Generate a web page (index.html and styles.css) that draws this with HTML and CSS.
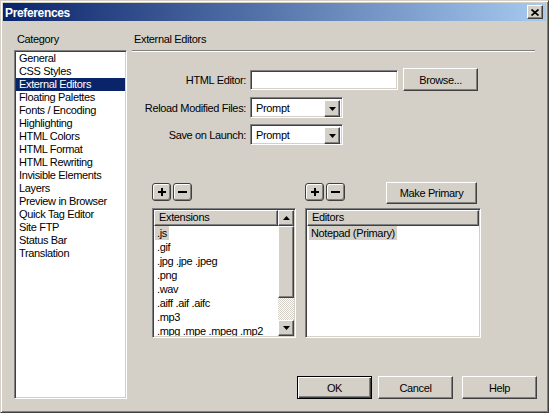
FILE: index.html
```html
<!DOCTYPE html>
<html>
<head>
<meta charset="utf-8">
<title>Preferences</title>
<link rel="stylesheet" href="styles.css">
</head>
<body>
<div class="window">
  <div class="titlebar">
    <span class="title">Preferences</span>
    <span class="close btn"><svg width="8" height="7" viewBox="0 0 8 7"><path d="M0.5 0.5 L7.5 6.5 M7.5 0.5 L0.5 6.5" stroke="#000" stroke-width="1.7" fill="none"/></svg></span>
  </div>
  <div class="body">
    <div class="leftcol">
      <div class="label cat-label">Category</div>
      <div class="listbox sunken">
        <div class="item">General</div>
        <div class="item">CSS Styles</div>
        <div class="item sel">External Editors</div>
        <div class="item">Floating Palettes</div>
        <div class="item">Fonts / Encoding</div>
        <div class="item">Highlighting</div>
        <div class="item">HTML Colors</div>
        <div class="item">HTML Format</div>
        <div class="item">HTML Rewriting</div>
        <div class="item">Invisible Elements</div>
        <div class="item">Layers</div>
        <div class="item">Preview in Browser</div>
        <div class="item">Quick Tag Editor</div>
        <div class="item">Site FTP</div>
        <div class="item">Status Bar</div>
        <div class="item">Translation</div>
      </div>
    </div>
    <div class="rightcol">
      <div class="label section">External Editors</div>
      <div class="sep"></div>
      <div class="form">
        <div class="row r1">
          <span class="flabel">HTML Editor:</span>
          <span class="edit sunken"></span>
          <span class="btn browse">Browse...</span>
        </div>
        <div class="row">
          <span class="flabel">Reload Modified Files:</span>
          <span class="combo sunken"><span class="val">Prompt</span><span class="dd btn"><svg width="7" height="4" viewBox="0 0 7 4"><polygon points="0,0 7,0 3.5,4" fill="#000"/></svg></span></span>
        </div>
        <div class="row">
          <span class="flabel">Save on Launch:</span>
          <span class="combo sunken"><span class="val">Prompt</span><span class="dd btn"><svg width="7" height="4" viewBox="0 0 7 4"><polygon points="0,0 7,0 3.5,4" fill="#000"/></svg></span></span>
        </div>
      </div>
      <div class="lower">
        <div class="group g-ext">
          <div class="tools">
            <span class="pm"><svg width="8" height="8" viewBox="0 0 8 8"><rect x="0" y="3" width="8" height="2" fill="#000"/><rect x="3" y="0" width="2" height="8" fill="#000"/></svg></span>
            <span class="pm"><svg width="9" height="2" viewBox="0 0 9 2"><rect x="0" y="0" width="9" height="2" fill="#000"/></svg></span>
          </div>
          <div class="list sunken ext">
            <div class="lcontent">
              <div class="lhead">Extensions</div>
              <div class="litem"><span class="hl">.js</span></div>
              <div class="litem"><span>.gif</span></div>
              <div class="litem"><span>.jpg .jpe .jpeg</span></div>
              <div class="litem"><span>.png</span></div>
              <div class="litem"><span>.wav</span></div>
              <div class="litem"><span>.aiff .aif .aifc</span></div>
              <div class="litem"><span>.mp3</span></div>
              <div class="litem"><span>.mpg .mpe .mpeg .mp2</span></div>
            </div>
            <div class="vscroll">
              <span class="sbb btn"><svg width="7" height="4" viewBox="0 0 7 4"><polygon points="0,4 7,4 3.5,0" fill="#000"/></svg></span>
              <span class="thumb btn"></span>
              <span class="track"></span>
              <span class="sbb btn"><svg width="7" height="4" viewBox="0 0 7 4"><polygon points="0,0 7,0 3.5,4" fill="#000"/></svg></span>
            </div>
          </div>
        </div>
        <div class="group g-ed">
          <div class="tools">
            <span class="pm"><svg width="8" height="8" viewBox="0 0 8 8"><rect x="0" y="3" width="8" height="2" fill="#000"/><rect x="3" y="0" width="2" height="8" fill="#000"/></svg></span>
            <span class="pm"><svg width="9" height="2" viewBox="0 0 9 2"><rect x="0" y="0" width="9" height="2" fill="#000"/></svg></span>
            <span class="btn primary">Make Primary</span>
          </div>
          <div class="list sunken ed">
            <div class="lcontent">
              <div class="lhead">Editors</div>
              <div class="litem"><span class="hl">Notepad (Primary)</span></div>
            </div>
          </div>
        </div>
      </div>
      <div class="buttons">
        <span class="btn dlg ok">OK</span>
        <span class="btn dlg cancel">Cancel</span>
        <span class="btn dlg help">Help</span>
      </div>
    </div>
  </div>
</div>
</body>
</html>
```
FILE: styles.css
```css
* { box-sizing: border-box; }
html, body { margin: 0; padding: 0; }
body {
  width: 549px;
  height: 413px;
  overflow: hidden;
  background: #d4d0c8;
  font-family: "Liberation Sans", Arial, sans-serif;
  font-size: 11px;
  letter-spacing: -0.35px;
  color: #000;
}
.window {
  width: 549px;
  height: 413px;
  background: #d4d0c8;
  border: 1px solid;
  border-color: #d4d0c8 #404040 #404040 #d4d0c8;
  box-shadow: inset 1px 1px #fff, inset -1px -1px #808080;
  padding: 2px;
  display: flex;
  flex-direction: column;
}
.titlebar {
  height: 18px;
  flex: none;
  background: linear-gradient(to right, #0a246a, #a6caf0);
  display: flex;
  align-items: flex-start;
  justify-content: space-between;
  padding: 0 3px 0 2px;
}
.title {
  color: #fff;
  font-weight: bold;
  font-size: 12px;
  line-height: 14px;
  margin-top: 3px;
}
.btn {
  background: #d4d0c8;
  border: 1px solid;
  border-color: #fff #404040 #404040 #fff;
  box-shadow: inset -1px -1px #808080;
  display: flex;
  align-items: center;
  justify-content: center;
  white-space: nowrap;
}
.sunken {
  background: #fff;
  border: 1px solid;
  border-color: #808080 #fff #fff #808080;
  box-shadow: inset 1px 1px #404040, inset -1px -1px #d4d0c8;
  padding: 1px;
}
.close {
  width: 16px;
  height: 14px;
  margin-top: 2px;
}
.body {
  flex: 1;
  display: flex;
  padding: 12px 11px 11px 11px;
}
.leftcol {
  width: 113px;
  flex: none;
  display: flex;
  flex-direction: column;
}
.label {
  height: 13px;
  line-height: 13px;
  white-space: nowrap;
}
.cat-label { padding-left: 3px; }
.listbox {
  margin-top: 4px;
  height: 349px;
  overflow: hidden;
}
.item {
  height: 13px;
  line-height: 13px;
  padding-left: 3px;
  white-space: nowrap;
}
.item.sel {
  background: #0a246a;
  color: #fff;
}
.rightcol {
  flex: 1;
  margin-left: 5px;
  display: flex;
  flex-direction: column;
}
.section { padding-left: 2px; }
.sep {
  margin-top: 4px;
  height: 2px;
  border-top: 1px solid #808080;
  border-bottom: 1px solid #fff;
}
.form { margin-top: 16px; }
.row {
  display: flex;
  align-items: center;
  height: 21px;
  margin-top: 6px;
}
.row.r1 { height: 23px; margin-top: 0; }
.flabel {
  width: 118px;
  flex: none;
  text-align: right;
  padding-right: 4px;
  white-space: nowrap;
}
.edit {
  width: 148px;
  height: 20px;
}
.browse {
  width: 75px;
  height: 23px;
  margin-left: 5px;
}
.combo {
  width: 93px;
  height: 21px;
  display: flex;
  padding: 2px;
}
.val {
  flex: 1;
  padding-left: 3px;
  line-height: 17px;
}
.dd {
  width: 16px;
  height: 17px;
  flex: none;
}
.lower {
  display: flex;
  margin-top: 37px;
  padding-left: 20px;
}
.group { display: flex; flex-direction: column; }
.g-ext { width: 144px; margin-right: 9px; }
.g-ed { width: 176px; }
.tools {
  display: flex;
  align-items: flex-start;
  height: 22px;
}
.pm {
  width: 19px;
  height: 18px;
  margin-top: 1px;
  background: #d4d0c8;
  border: 1px solid #404040;
  border-radius: 3px;
  box-shadow: inset 1px 1px #fff, inset -1px -1px #808080;
  display: flex;
  align-items: center;
  justify-content: center;
}
.pm + .pm { margin-left: 2px; }
.primary {
  width: 91px;
  height: 22px;
  margin-left: auto;
  margin-right: 4px;
}
.list {
  margin-top: 4px;
  height: 130px;
  display: flex;
  overflow: hidden;
}
.lcontent {
  flex: 1;
  overflow: hidden;
  min-width: 0;
}
.lhead {
  height: 16px;
  line-height: 13px;
  padding-left: 4px;
  background: #d4d0c8;
  border: 1px solid;
  border-color: #fff #404040 #404040 #fff;
  box-shadow: inset -1px -1px #808080;
  white-space: nowrap;
}
.litem {
  height: 14px;
  line-height: 14px;
  padding-left: 1px;
  white-space: nowrap;
}
.ed .litem { padding-left: 2px; }
.litem span {
  display: inline-block;
  padding: 0 2px;
  height: 14px;
}
.litem .hl { background: #d4d0c8; }
.vscroll {
  width: 16px;
  flex: none;
  display: flex;
  flex-direction: column;
}
.sbb { height: 16px; flex: none; }
.thumb { height: 72px; flex: none; }
.track {
  flex: 1;
  background: repeating-conic-gradient(#ffffff 0 25%, #d4d0c8 0 50%) 0 0 / 2px 2px;
}
.buttons {
  margin-top: auto;
  margin-right: -2px;
  display: flex;
  justify-content: flex-end;
  height: 23px;
}
.dlg {
  width: 75px;
  height: 23px;
}
.ok {
  border: 1px solid #000;
  box-shadow: inset 1px 1px #fff, inset -1px -1px #404040, inset -2px -2px #808080;
}
.cancel { margin-left: 6px; }
.help { margin-left: 9px; }
```
